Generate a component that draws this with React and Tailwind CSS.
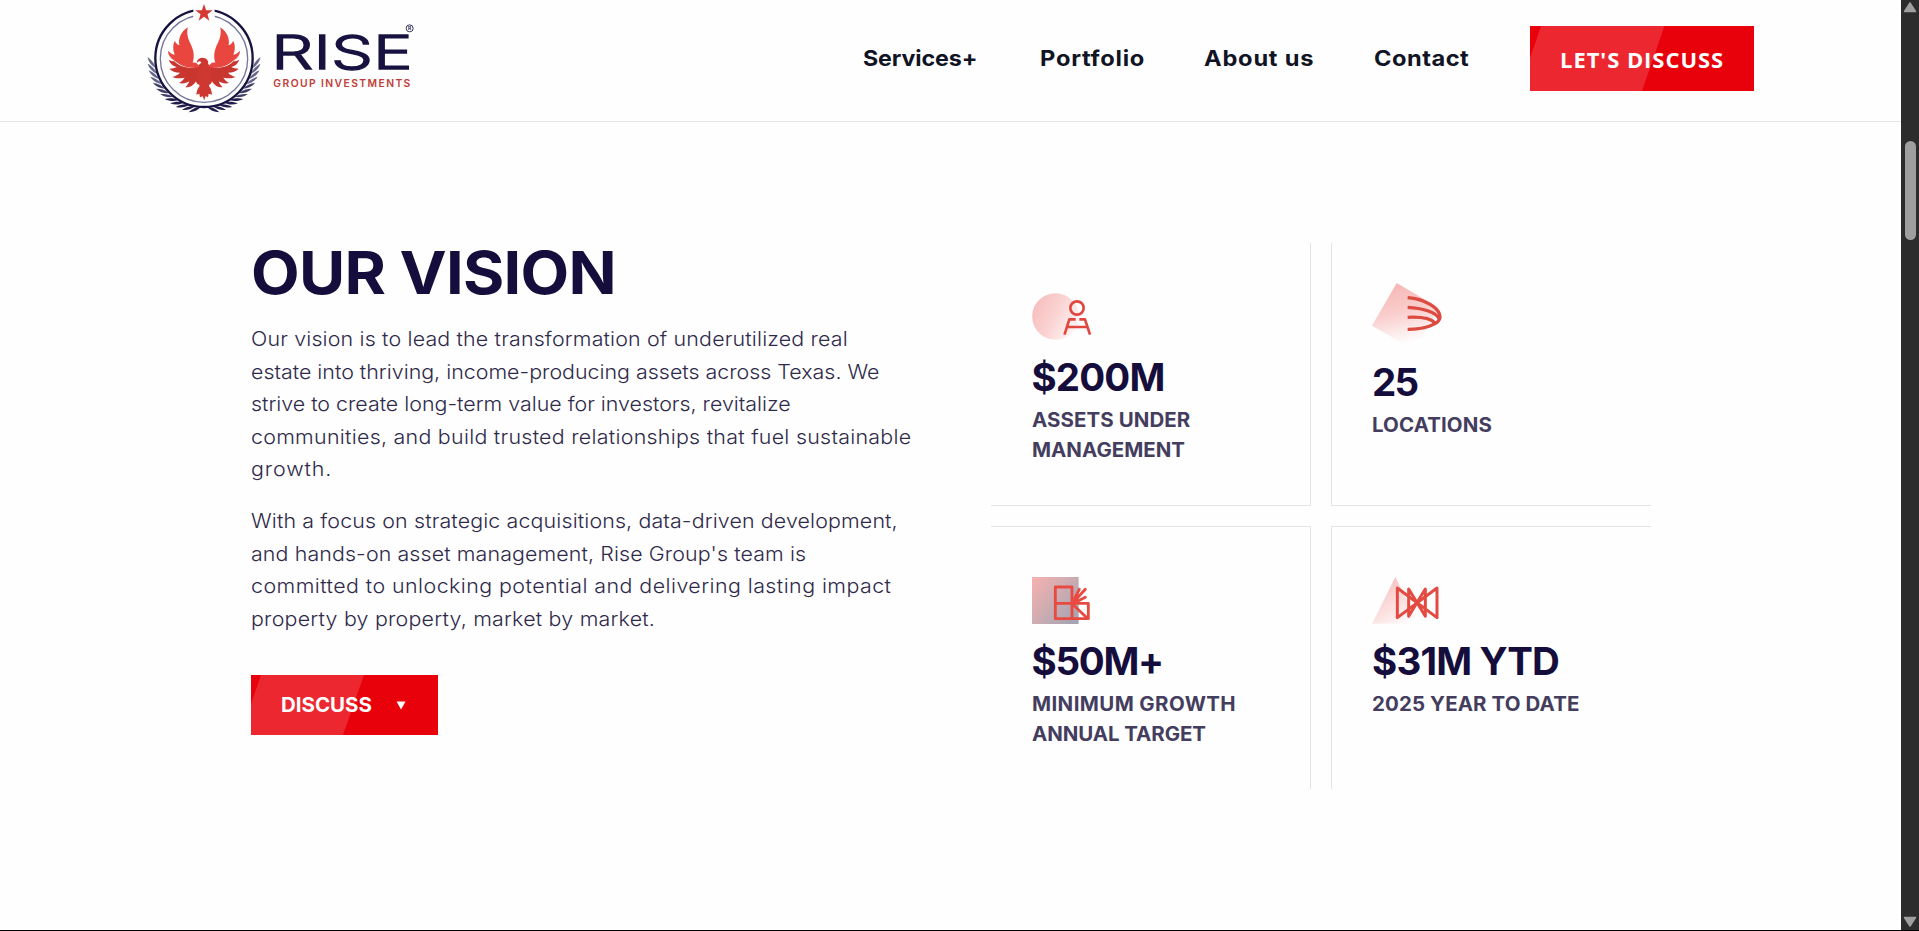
import React from "react";

const leaves = Array.from({ length: 12 }, (_, i) => i);

function Laurel() {
  return leaves.map((i) => {
    const deg = 177 - i * 7;
    const a = (deg * Math.PI) / 180;
    const x = 192 + 157 * Math.cos(a);
    const y = 180 + 150 * Math.sin(a);
    return (
      <path
        key={i}
        transform={`translate(${x} ${y}) rotate(${deg - 180 - 32})`}
        d="M0 20 C-6 8 -7 -6 -1 -21 C4 -8 5 8 0 20 Z"
        fill={i < 4 ? "#66668a" : i < 7 ? "#434068" : "#221d4a"}
      />
    );
  });
}

function Wing() {
  return (
    <>
      <path
        fill="#c9362f"
        d="M84 152 C88 172 104 188 124 198 C150 206 168 206 182 190 L194 180 L194 262 L184 250 C176 256 170 254 168 244 C160 258 148 263 136 262 C142 256 146 250 148 244 C138 250 128 252 117 249 C124 244 130 240 134 233 C120 236 108 236 97 231 C108 228 114 224 120 218 C106 218 96 214 88 206 C98 206 104 204 110 201 C98 198 90 190 86 179 C92 182 98 184 104 184 C92 176 84 164 84 152 Z"
      />
      <path
        fill="#e8463f"
        d="M143 82 C140 98 142 112 150 128 C162 150 164 170 158 188 C168 186 172 190 178 200 C160 208 130 202 112 188 C98 178 86 168 84 152 C92 160 98 164 104 164 C98 150 98 136 104 122 C108 130 112 134 118 136 C114 116 124 94 143 82 Z"
      />
    </>
  );
}

function Logo() {
  return (
    <svg width="280" height="121" viewBox="0 0 840 363" className="shrink-0">
      <Laurel />
      <g transform="matrix(-1 0 0 1 384 0)">
        <Laurel />
      </g>
      <circle cx="192" cy="175" r="146" fill="#fefefe" stroke="#17123f" strokeWidth="7" />
      <circle cx="192" cy="176" r="131" fill="none" stroke="#77779a" strokeWidth="4" />
      <path d="M160 10 H224 V66 H160 Z" fill="#fefefe" />
      <path
        d="M192 12 L198.500 31 L218 31 L202.500 43 L208 62 L192 50.500 L176 62 L181.500 43 L166 31 L185.500 31 Z"
        fill="#d63a33"
      />
      <Wing />
      <g transform="matrix(-1 0 0 1 384 0)">
        <Wing />
      </g>
      <path
        fill="#cf3831"
        d="M171 184 C174 174 186 171 196 175 C204 179 206 186 204 194 C214 208 216 236 207 258 C212 264 215 272 216 284 L206 281 L204 292 L197 288 L193 301 L188 289 L180 292 L178 281 L169 284 C170 272 174 264 179 258 C168 236 172 210 186 196 C186 190 184 186 180 184 C176 183 173 186 171 189 Z"
      />
      <text
        x="394"
        y="206"
        fontFamily="Inter, sans-serif"
        fontWeight="300"
        fontSize="141"
        textLength="424"
        lengthAdjust="spacingAndGlyphs"
        fill="#17123f"
        stroke="#17123f"
        strokeWidth="4"
      >
        RISE
      </text>
      <text
        x="400"
        y="260"
        fontFamily="Inter, sans-serif"
        fontWeight="600"
        fontSize="31"
        textLength="411"
        fill="#bf4038"
      >
        GROUP INVESTMENTS
      </text>
      <circle cx="809" cy="85" r="10.5" fill="none" stroke="#17123f" strokeWidth="2.5" />
      <text x="809" y="90.5" textAnchor="middle" fontFamily="Inter, sans-serif" fontWeight="600" fontSize="15" fill="#17123f">
        R
      </text>
    </svg>
  );
}

function PersonIcon() {
  return (
    <svg width="60" height="47" viewBox="35 39 180 141">
      <defs>
        <linearGradient id="g1" x1="0" y1="0.2" x2="1" y2="0.7">
          <stop offset="0" stopColor="#f7bcbc" />
          <stop offset="0.5" stopColor="#fad3d2" />
          <stop offset="1" stopColor="#fff7f7" />
        </linearGradient>
      </defs>
      <circle cx="105.500" cy="109.500" r="70" fill="url(#g1)" />
      <g fill="none" stroke="#e0483f" strokeWidth="8">
        <circle cx="170" cy="84" r="20" />
        <path strokeLinejoin="round" d="M132.500 164 L147 118 H166 M177 118 H194 L209 164 M139 141 H202" />
      </g>
    </svg>
  );
}

function ArcsIcon() {
  return (
    <svg width="70" height="63" viewBox="157 159 210 189">
      <defs>
        <linearGradient id="g2" x1="0.3" y1="0" x2="0.55" y2="1">
          <stop offset="0" stopColor="#f5b6b4" />
          <stop offset="0.45" stopColor="#f9cfce" />
          <stop offset="0.9" stopColor="#fefefe" />
        </linearGradient>
      </defs>
      <path d="M231 159 L157 287 L284 360 L358 233 Z" fill="url(#g2)" />
      <g fill="none" stroke="#dd4a40" strokeWidth="10">
        <path d="M264 203 C318 207 361 236 361 261 C361 284 312 298 264 298" />
        <path d="M264 232 C306 234 350 246 358 266" />
        <path d="M264 262 C304 260 334 266 346 279" />
      </g>
    </svg>
  );
}

function BlocksIcon() {
  return (
    <svg width="59" height="47" viewBox="35 51 177 141">
      <defs>
        <linearGradient id="g3" x1="0" y1="0" x2="1" y2="0.8">
          <stop offset="0" stopColor="#f7b1b0" />
          <stop offset="0.5" stopColor="#d0acb1" />
          <stop offset="1" stopColor="#a5a5b4" />
        </linearGradient>
      </defs>
      <path d="M35 51 H175 V192 H35 Z" fill="url(#g3)" />
      <g fill="none" stroke="#e84a42" strokeWidth="8.500" strokeLinejoin="round" strokeLinecap="round">
        <path d="M105 81 H155 V176 H105 Z M105 130 H204 V176 H155" />
        <path d="M157 133 L201 175 M155 130 L177 88 M156 130 L195 88 M157 131 L195 112" />
      </g>
    </svg>
  );
}

function BowIcon() {
  return (
    <svg width="67" height="47" viewBox="188 232 201 141">
      <defs>
        <linearGradient id="g4" x1="0.2" y1="0" x2="0.8" y2="1">
          <stop offset="0" stopColor="#f7bcbb" />
          <stop offset="0.8" stopColor="#fdeeee" />
          <stop offset="1" stopColor="#fefefe" />
        </linearGradient>
      </defs>
      <path d="M258 232 L188 372 H328 Z" fill="url(#g4)" />
      <g fill="none" stroke="#e34b42" strokeWidth="9" strokeLinejoin="round">
        <path d="M264 265 L383 354 V265 L264 354 Z" />
        <path d="M298 268 L348 350 V268 L298 350 Z" />
      </g>
    </svg>
  );
}

function Stat({ icon, value, valueClass, labels, className, gap }) {
  return (
    <div className={`box-border h-[263px] w-[320px] border-[#e4e4e6] ${className}`}>
      {icon}
      <div className={`whitespace-nowrap text-[38.5px] font-bold leading-[48px] text-[#150d3b] ${gap} ${valueClass}`}>
        {value}
      </div>
      <div className="mt-1 text-[19.5px] font-bold leading-[30px] text-[#443d5e]">
        {labels.map(([text, cls]) => (
          <div key={text} className={`origin-left scale-x-[1.05] whitespace-nowrap ${cls}`}>
            {text}
          </div>
        ))}
      </div>
    </div>
  );
}

function Line({ className, children }) {
  return <span className={`block origin-left scale-x-[1.07] whitespace-nowrap ${className}`}>{children}</span>;
}

export default function App() {
  return (
    <div className="flex h-[931px] w-full flex-col overflow-hidden bg-black font-['Inter',sans-serif]">
      <div className="flex h-[930px] w-full">
        <div className="flex min-w-0 flex-1 flex-col bg-[#fefefe]">
          <header className="flex h-[122px] shrink-0 border-b border-[#e5e5e7] pl-[140px]">
            <Logo />
            <nav className="ml-[443px] flex pt-[43px] text-[21.5px] font-bold leading-[30px] text-[#101424]">
              <a className="w-[176.5px] origin-left scale-x-[1.08] whitespace-nowrap tracking-[-0.1px]">Services+</a>
              <a className="w-[164px] origin-left scale-x-[1.1] whitespace-nowrap tracking-[0.68px]">Portfolio</a>
              <a className="w-[170.5px] origin-left scale-x-[1.1] whitespace-nowrap tracking-[0.7px]">About us</a>
              <a className="w-[156px] origin-left scale-x-[1.1] whitespace-nowrap tracking-[0.45px]">Contact</a>
            </nav>
            <button className="relative mt-[26px] flex h-[65px] w-[224px] shrink-0 items-center overflow-hidden bg-[#e8000b] pl-[30px]">
              <svg className="absolute inset-0" width="224" height="65" viewBox="0 0 224 65">
                <path d="M11 0 H134.500 L112 65 H0 V32 Z" fill="#ec2730" />
              </svg>
              <span className="relative whitespace-nowrap font-['Open_Sans'] text-[22px] font-bold leading-[30px] tracking-[0.95px] text-white">
                LET'S DISCUSS
              </span>
            </button>
          </header>

          <main className="flex">
            <section className="w-[740px] shrink-0 pl-[251px] pt-[116px]">
              <h1 className="origin-left scale-x-[1.07] whitespace-nowrap text-[59px] font-bold leading-[70px] tracking-[-0.65px] text-[#150d3b]">
                OUR VISION
              </h1>
              <p className="mt-[15px] text-[20px] font-light leading-[32.5px] text-[#2f2a4a]">
                <Line className="tracking-[0.15px]">Our vision is to lead the transformation of underutilized real</Line>
                <Line className="tracking-[0px]">estate into thriving, income-producing assets across Texas. We</Line>
                <Line className="tracking-[-0.01px]">strive to create long-term value for investors, revitalize</Line>
                <Line className="tracking-[0.25px]">communities, and build trusted relationships that fuel sustainable</Line>
                <Line className="tracking-[0.82px]">growth.</Line>
              </p>
              <p className="mt-[19.5px] text-[20px] font-light leading-[32.5px] text-[#2f2a4a]">
                <Line className="tracking-[0.12px]">With a focus on strategic acquisitions, data-driven development,</Line>
                <Line className="tracking-[0.1px]">and hands-on asset management, Rise Group's team is</Line>
                <Line className="tracking-[0.41px]">committed to unlocking potential and delivering lasting impact</Line>
                <Line className="tracking-[0.2px]">property by property, market by market.</Line>
              </p>
              <button className="relative mt-[40px] flex h-[60px] w-[187px] items-center overflow-hidden bg-[#e8000b] pl-[30px] text-white">
                <svg className="absolute inset-0" width="187" height="60" viewBox="0 0 187 60">
                  <path d="M10 0 H113 L92 60 H0 V29 Z" fill="#ec2730" />
                </svg>
                <span className="relative w-[115px] origin-left scale-x-[1.05] whitespace-nowrap text-left text-[19.5px] font-bold leading-[30px]">
                  DISCUSS
                </span>
                <svg className="relative" width="10" height="9" viewBox="0 0 10 9">
                  <path d="M0.500 0.500 H9.500 L5 8.500 Z" fill="#ffffff" />
                </svg>
              </button>
            </section>

            <section className="ml-[251px] mt-[121px] grid grid-cols-[320px_320px] gap-5">
              <Stat
                className="border-b border-r pl-[40.5px] pt-[50px]"
                icon={<PersonIcon />}
                value="$200M"
                valueClass="tracking-[-0.85px]"
                gap="mt-[13px]"
                labels={[["ASSETS UNDER", "tracking-[0.07px]"], ["MANAGEMENT", "tracking-[0px]"]]}
              />
              <Stat
                className="border-b border-l pl-10 pt-[40px]"
                icon={<ArcsIcon />}
                value="25"
                valueClass="tracking-[-1.75px]"
                gap="mt-[12px]"
                labels={[["LOCATIONS", "tracking-[0.1px]"]]}
              />
              <Stat
                className="border-r border-t pl-[40.5px] pt-[50px]"
                icon={<BlocksIcon />}
                value="$50M+"
                valueClass="tracking-[-1.29px]"
                gap="mt-[13px]"
                labels={[["MINIMUM GROWTH", "tracking-[0.38px]"], ["ANNUAL TARGET", "tracking-[-0.07px]"]]}
              />
              <Stat
                className="border-l border-t pl-10 pt-[50px]"
                icon={<BowIcon />}
                value="$31M YTD"
                valueClass="tracking-[-0.83px]"
                gap="mt-[13px]"
                labels={[["2025 YEAR TO DATE", "tracking-[0.1px]"]]}
              />
            </section>
          </main>
        </div>

        <aside className="flex w-[18px] shrink-0 flex-col items-center bg-[#2c2c2c]">
          <svg className="mt-[2px] shrink-0" width="14" height="11" viewBox="0 0 14 11">
            <path d="M7 1 L12.500 9.500 H1.500 Z" fill="#9f9f9f" stroke="#9f9f9f" strokeWidth="1.500" strokeLinejoin="round" />
          </svg>
          <div className="mt-[128px] h-[99px] w-[11px] shrink-0 rounded-full bg-[#9f9f9f]" />
          <svg className="mb-[3px] mt-auto shrink-0" width="14" height="11" viewBox="0 0 14 11">
            <path d="M7 10 L12.500 1.500 H1.500 Z" fill="#9f9f9f" stroke="#9f9f9f" strokeWidth="1.500" strokeLinejoin="round" />
          </svg>
        </aside>
      </div>
    </div>
  );
}
